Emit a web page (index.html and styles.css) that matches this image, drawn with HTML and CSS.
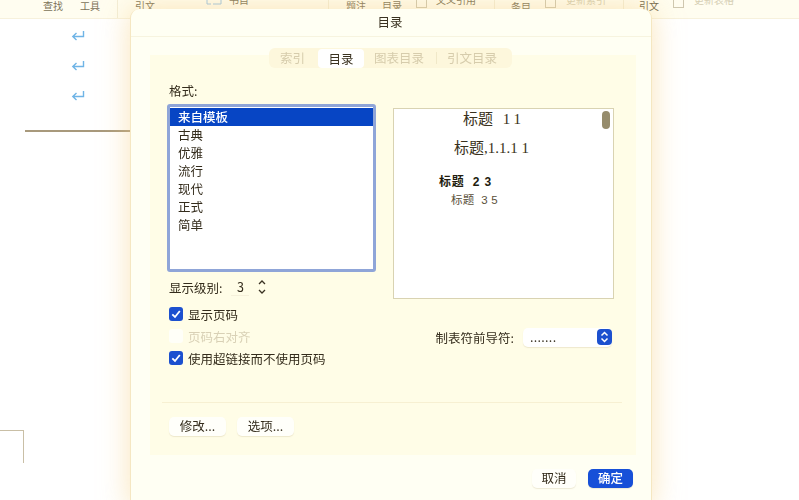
FILE: index.html
```html
<!DOCTYPE html>
<html lang="zh">
<head>
<meta charset="utf-8">
<title>目录</title>
<link rel="stylesheet" href="styles.css">
</head>
<body>
<div class="app">
  <div class="toolbar">
    <span class="tb w-find">查找</span>
    <span class="tb w-tool">工具</span>
    <span class="tb-sep"></span>
    <span class="tb w-cite">引文</span>
    <svg class="tb-icon w-bibicon" viewBox="0 0 16 10"><path d="M1 0v4h4M15 0v4h-4M7 4h4" fill="none" stroke="#9cc4e4" stroke-width="1"/></svg>
    <span class="tb up w-bib">书目</span>
    <span class="tb-sep s2"></span>
    <span class="tb w-cap">题注</span>
    <span class="tb w-toc">目录</span>
    <span class="tb-box w-b1"></span>
    <span class="tb up w-quote">文义引用</span>
    <span class="tb-sep s3"></span>
    <span class="tb low w-entry">条目</span>
    <span class="tb-box w-b2"></span>
    <span class="tb faint up w-idx">更新索引</span>
    <span class="tb-sep s4"></span>
    <span class="tb low2 w-cite2">引文</span>
    <span class="tb-box w-b3"></span>
    <span class="tb faint up">更新表格</span>
  </div>
  <div class="doc">
    <svg class="mark" viewBox="0 0 14 12"><path d="M12.5 1v5.5H2M5.5 3 1.8 6.5 5.5 10" fill="none" stroke="#6fb4e6" stroke-width="1.4"/></svg>
    <svg class="mark" viewBox="0 0 14 12"><path d="M12.5 1v5.5H2M5.5 3 1.8 6.5 5.5 10" fill="none" stroke="#6fb4e6" stroke-width="1.4"/></svg>
    <svg class="mark" viewBox="0 0 14 12"><path d="M12.5 1v5.5H2M5.5 3 1.8 6.5 5.5 10" fill="none" stroke="#6fb4e6" stroke-width="1.4"/></svg>
    <div class="rule"></div>
    <div class="crop"></div>
  </div>

  <section class="dialog">
    <header class="title">目录</header>
    <nav class="tabs">
      <span class="tab first">索引</span>
      <span class="tab on">目录</span>
      <span class="tab third">图表目录</span>
      <i class="tab-sep"></i>
      <span class="tab last">引文目录</span>
    </nav>
    <div class="panel">
      <div class="label">格式:</div>
      <div class="columns">
        <div class="left">
          <ul class="list">
            <li class="sel">来自模板</li>
            <li>古典</li>
            <li>优雅</li>
            <li>流行</li>
            <li>现代</li>
            <li>正式</li>
            <li>简单</li>
          </ul>
          <div class="level">
            <span>显示级别:</span>
            <span class="num">3</span>
            <svg class="stepper" viewBox="0 0 12 18"><path d="M3 6l3-3 3 3M3 12l3 3 3-3" fill="none" stroke="#3a3222" stroke-width="1.3"/></svg>
          </div>
        </div>
        <div class="preview">
          <p class="p1">标题&nbsp;&nbsp; 1 1</p>
          <p class="p2">标题,1.1.1 1</p>
          <p class="p3">标题&nbsp; 2 3</p>
          <p class="p4">标题&nbsp; 3 5</p>
          <span class="scroll"></span>
        </div>
      </div>
      <div class="options">
        <div class="checks">
          <div class="check"><svg class="cb" viewBox="0 0 14 14"><path d="M3.3 7.3 6 10l4.8-6" fill="none" stroke="#fff" stroke-width="1.8"/></svg>显示页码</div>
          <div class="check off"><span class="cb-off"></span>页码右对齐</div>
          <div class="check"><svg class="cb" viewBox="0 0 14 14"><path d="M3.3 7.3 6 10l4.8-6" fill="none" stroke="#fff" stroke-width="1.8"/></svg>使用超链接而不使用页码</div>
        </div>
        <div class="leader">
          <span>制表符前导符:</span>
          <div class="select">
            <span class="dots">.......</span>
            <svg class="arrows" viewBox="0 0 15 16"><path d="M4.5 6.5 7.5 3.5l3 3M4.5 9.5l3 3 3-3" fill="none" stroke="#fff" stroke-width="1.5"/></svg>
          </div>
        </div>
      </div>
      <div class="divider"></div>
      <div class="actions">
        <button class="btn">修改...</button>
        <button class="btn">选项...</button>
      </div>
    </div>
    <footer class="footer">
      <button class="btn cancel">取消</button>
      <button class="btn ok">确定</button>
    </footer>
  </section>
</div>
</body>
</html>
```
FILE: styles.css
```css
* { box-sizing: border-box; }
html, body { margin: 0; padding: 0; }
body {
  width: 799px;
  height: 500px;
  overflow: hidden;
  background: #fff;
  font-family: "Noto Sans CJK SC", "Noto Sans", sans-serif;
  color: #342c1c;
}
.app { position: relative; width: 799px; height: 500px; overflow: hidden; filter: blur(.35px); }

/* ribbon behind the dialog */
.toolbar {
  display: flex;
  align-items: flex-start;
  height: 19px;
  padding-left: 43px;
  background: #fffdf0;
  border-bottom: 1px solid #f7f1dc;
  overflow: hidden;
  font-size: 10px;
  letter-spacing: 0;
  color: #7c7258;
}
.tb { flex: none; line-height: 12px; margin-top: 0; }
.tb.up { margin-top: -6px; }
.tb.low { margin-top: 1px; }
.tb.low2 { margin-top: 0; color: #6d6348; }
.tb.faint { color: #d6cfb4; }
.tb-sep { flex: none; width: 1px; height: 19px; background: #f3edd6; }
.tb-box { flex: none; width: 11px; height: 13px; margin-top: -5px; border: 1px solid #cfc8b0; }
.tb-icon { flex: none; }
.w-find { width: 37px; }
.w-tool { width: 37px; }
.w-tool + .tb-sep { margin-right: 17px; }
.w-cite { width: 71px; }
.w-bibicon { width: 16px; height: 10px; margin-right: 7px; }
.w-bib { width: 99px; }
.s2 { margin-right: 17px; }
.w-cap { width: 36px; }
.w-toc { width: 34px; }
.w-b1 { margin-right: 9px; }
.w-quote { width: 58px; }
.s3 { margin-right: 16px; }
.w-entry { width: 34px; }
.w-b2 { margin-right: 10px; }
.w-idx { width: 57px; }
.s4 { margin-right: 15px; }
.w-cite2 { width: 34px; }
.w-b3 { margin-right: 10px; }

/* document */
.doc {
  display: flex;
  flex-direction: column;
  width: 130px;
  padding-top: 11px;
}
.mark { display: block; width: 14px; height: 12px; margin: 0 0 18px 71px; }
.rule { width: 105px; height: 1.5px; margin: 10px 0 0 25px; background: #a8997c; }
.crop {
  width: 24px;
  height: 33px;
  margin-top: 298px;
  border-top: 1px solid #c9bfa6;
  border-right: 1px solid #c9bfa6;
}

/* dialog */
.dialog {
  position: absolute;
  left: 130px;
  top: 9px;
  width: 522px;
  height: 500px;
  display: flex;
  flex-direction: column;
  align-items: stretch;
  background: #fffff3;
  border-radius: 9px 9px 0 0;
  border-left: 1px solid #f5e7c2;
  border-right: 1px solid #f5e7c2;
  box-shadow: 0 0 30px rgba(246, 208, 130, .55);
}
.title {
  height: 28px;
  flex: none;
  padding-right: 2px;
  text-align: center;
  font-size: 12.5px;
  line-height: 26px;
  color: #3a3220;
  border-bottom: 1px solid #f7f4df;
}
.tabs {
  position: relative;
  z-index: 1;
  flex: none;
  align-self: flex-start;
  display: flex;
  align-items: center;
  height: 20px;
  margin: 11px 0 0 138px;
  background: #fdf7dc;
  border-radius: 6px;
  font-size: 12.5px;
  color: #d6ccac;
}
.tab { padding: 0 10px; line-height: 20px; white-space: nowrap; }
.tab.first { padding: 0 13px 0 11px; }
.tab.third { padding: 0 12px 0 10px; }
.tab.last { padding: 0 15px 0 10px; }
.tab.on { width: 46px; padding: 0; height: 19px; line-height: 19px; text-align: center; background: #fff; color: #3a3220; border-radius: 4px; }
.tab-sep { width: 1px; height: 12px; background: #f0e8c8; }
.panel {
  flex: none;
  margin: -13px 15px 0 19px;
  height: 400px;
  padding: 27px 0 0 17px;
  background: #fffde7;
  font-size: 12.5px;
}
.label { line-height: 18px; padding-left: 2px; }
.columns { display: flex; align-items: flex-start; height: 195px; margin-top: 4px; }
.left { flex: none; width: 209px; }
.list {
  list-style: none;
  width: 209px;
  height: 168px;
  margin: 0;
  padding: 1px 0 0;
  background: #fff;
  border: 3px solid #8fa5d8;
  border-radius: 3px;
}
.list li { height: 18px; line-height: 18px; padding-left: 8px; }
.list li.sel { background: #0745c4; color: #fff; font-weight: 500; }
.preview {
  position: relative;
  width: 221px;
  height: 191px;
  margin: 4px 0 0 17px;
  padding-top: 1px;
  background: #fff;
  border: 1px solid #d9d3b2;
}
.preview p { margin: 0; white-space: nowrap; }
.p1 { padding-left: 69px; font: 15px/19px "Liberation Serif", "Noto Sans CJK SC", serif; word-spacing: -.5px; color: #3a3220; }
.preview .p2 { padding-left: 60px; margin-top: 9px; font: 15px/20px "Liberation Serif", "Noto Sans CJK SC", serif; color: #3a3220; }
.preview .p3 { padding-left: 45px; margin-top: 16px; font: 700 12px/17px "Liberation Sans", "Noto Sans CJK SC", sans-serif; letter-spacing: .8px; color: #221c0e; }
.p4 { padding-left: 57px; font: 11.5px/18px "Liberation Sans", "Noto Sans CJK SC", sans-serif; letter-spacing: .2px; color: #5a503a; }
.scroll { position: absolute; right: 3px; top: 2px; width: 8px; height: 18px; background: #968c6c; border-radius: 4px; }
.level { display: flex; align-items: center; height: 18px; margin-top: 6px; padding-left: 2px; }
.num { width: 18px; margin-left: 9px; text-align: center; line-height: 17px; border-bottom: 1px solid #f5f0da; }
.stepper { width: 12px; height: 18px; margin-left: 7px; }
.options { display: flex; justify-content: space-between; align-items: center; width: 445px; margin-top: 4px; }
.check { display: flex; align-items: center; height: 22px; padding-left: 2px; }
.check.off { color: #d9d1b6; }
.cb { width: 14px; height: 14px; margin-right: 5px; background: #1c50cf; border-radius: 3px; }
.cb-off { width: 14px; height: 14px; margin-right: 5px; background: #fffff8; border-radius: 3px; }
.leader { display: flex; align-items: center; margin-top: 2px; }
.select {
  display: flex;
  justify-content: space-between;
  align-items: center;
  width: 89px;
  height: 19px;
  margin-left: 9px;
  padding: 0 0 0 7px;
  background: #fff;
  border-radius: 5px;
  box-shadow: 0 1px 1px rgba(160, 140, 90, .18);
}
.dots { letter-spacing: .3px; line-height: 16px; }
.arrows { width: 15px; height: 16px; background: #1c50cf; border-radius: 4px; }
.divider { height: 1px; margin: 33px 14px 0 -5px; background: #f7f0d2; }
.actions { display: flex; gap: 11px; margin-top: 14px; padding-left: 2px; }
.btn {
  height: 19px;
  padding: 0 0 2px;
  border: 0;
  border-radius: 5px;
  background: #fffffa;
  box-shadow: 0 1px 1px rgba(170, 150, 100, .2);
  font-family: inherit;
  font-size: 12.5px;
  line-height: 17px;
  color: #342c1c;
  width: 57px;
}
.footer { display: flex; justify-content: flex-end; gap: 12px; margin-top: 14px; padding-right: 18px; }
.btn.cancel { width: 44px; }
.btn.ok { width: 45px; background: #1750d8; color: #fff; font-weight: 500; }
```
